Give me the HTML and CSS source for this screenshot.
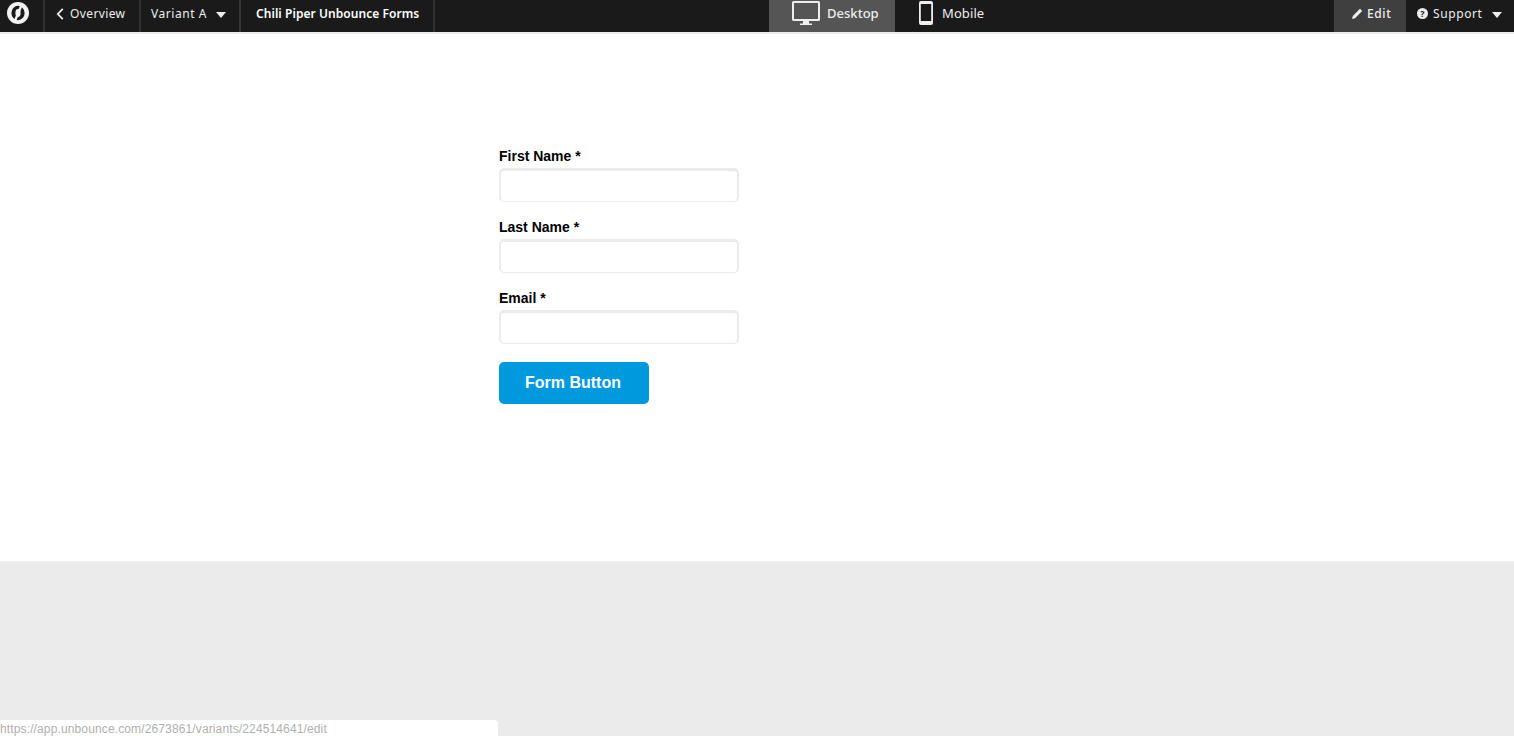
FILE: index.html
```html
<!DOCTYPE html>
<html lang="en">
<head>
<meta charset="utf-8">
<title>Chili Piper Unbounce Forms</title>
<link rel="stylesheet" href="styles.css">
</head>
<body>
<header class="topbar">
  <a class="logo-cell">
    <svg class="logo" viewBox="0 0 24 24" width="24" height="24"><circle cx="12" cy="12" r="11" fill="#f2f2f2"/><ellipse cx="12" cy="12" rx="6.600" ry="7.200" fill="#1a1a1a"/><ellipse cx="12" cy="12" rx="2.600" ry="4" fill="#f2f2f2"/><path d="M16 3 8.500 21" stroke="#f2f2f2" stroke-width="2.400" fill="none"/></svg>
  </a>
  <a class="cell cell-overview">
    <svg class="chev" viewBox="0 0 8 12" width="8" height="12"><path d="M6.800 .8 1.800 6l5 5.200" fill="none" stroke="#eee" stroke-width="1.800"/></svg>
    <span>Overview</span>
  </a>
  <a class="cell cell-variant"><span>Variant A</span><i class="caret"></i></a>
  <div class="cell cell-title">Chili Piper Unbounce Forms</div>
  <nav class="views">
    <a class="view view-desktop">
      <svg viewBox="0 0 30 26" width="30" height="26"><path fill-rule="evenodd" fill="#eee" d="M2.500 1h25A1.500 1.500 0 0 1 29 2.500v17a1.500 1.500 0 0 1-1.500 1.500h-25A1.500 1.500 0 0 1 1 19.500v-17A1.500 1.500 0 0 1 2.500 1zM3 3v16h24V3z"/><path fill="#eee" d="M12 21h6v2.500h3V25H9v-1.500h3z"/></svg>
      <span>Desktop</span>
    </a>
    <a class="view view-mobile">
      <svg viewBox="0 0 16 26" width="16" height="26"><path fill-rule="evenodd" fill="#eee" d="M3 1h10a2 2 0 0 1 2 2v20a2 2 0 0 1-2 2H3a2 2 0 0 1-2-2V3a2 2 0 0 1 2-2zM2.800 4v17h10.400V4z"/></svg>
      <span>Mobile</span>
    </a>
  </nav>
  <div class="actions">
    <a class="action-edit">
      <svg viewBox="0 0 12 12" width="12" height="12"><path fill="#eee" d="M9 .8 11.200 3 4 10.200 1 11l.8-3z"/></svg>
      <span>Edit</span>
    </a>
    <a class="action-support">
      <span class="help">?</span>
      <span>Support</span>
      <i class="caret caret-support"></i>
    </a>
  </div>
</header>
<main class="canvas">
  <form class="form">
    <label class="field"><span class="label">First Name *</span><span class="input"></span></label>
    <label class="field"><span class="label">Last Name *</span><span class="input"></span></label>
    <label class="field"><span class="label">Email *</span><span class="input"></span></label>
    <button class="submit" type="button">Form Button</button>
  </form>
</main>
<div class="backdrop"></div>
<div class="status">https://app.unbounce.com/2673861/variants/224514641/edit</div>
</body>
</html>
```

FILE: styles.css
```css
* { box-sizing: border-box; }
html, body { height: 100%; }
body {
  margin: 0;
  height: 736px;
  overflow: hidden;
  display: flex;
  flex-direction: column;
  background: #ebebeb;
  font-family: "Noto Sans", "Liberation Sans", sans-serif;
}
.topbar {
  display: flex;
  flex: none;
  height: 32px;
  background: #1a1a1a;
  color: #eeeeee;
  font-size: 12px;
  letter-spacing: 0.6px;
}
.logo-cell {
  width: 45px;
  flex: none;
  display: flex;
  align-items: center;
  padding-left: 6px;
  border-right: 2px solid #333;
}
.logo { display: block; margin-top: -6px; }
.cell {
  flex: none;
  display: flex;
  align-items: center;
  border-right: 2px solid #333;
  padding-bottom: 5px;
  white-space: nowrap;
}
.cell-overview { width: 96px; padding-left: 11px; gap: 6px; letter-spacing: 0.38px; }
.cell-variant { width: 100px; padding-left: 10px; gap: 9px; letter-spacing: 0.55px; }
.cell-title { width: 194px; padding-left: 15px; font-weight: 600; color: #fff; letter-spacing: 0.06px; }
.caret {
  display: block;
  width: 0;
  height: 0;
  border-left: 5px solid transparent;
  border-right: 5px solid transparent;
  border-top: 6px solid #eee;
  margin-top: 2px;
}
.views { display: flex; margin-left: 334px; }
.view {
  display: flex;
  align-items: center;
  height: 32px;
  padding-bottom: 6px;
  font-size: 13px;
}
.view svg { display: block; }
.view-desktop { width: 126px; background: #555; padding-left: 22px; gap: 6px; font-weight: 500; letter-spacing: 0.02px; }
.view-mobile { padding-left: 23px; gap: 8px; letter-spacing: 0.1px; }
.actions { display: flex; margin-left: auto; }
.action-edit {
  width: 72px;
  height: 32px;
  background: #3f3f3f;
  display: flex;
  align-items: center;
  gap: 4px;
  padding: 0 0 5px 17px;
  font-weight: 500;
}
.action-support {
  width: 108px;
  display: flex;
  align-items: center;
  gap: 5px;
  padding: 0 0 5px 11px;
}
.help {
  width: 11px;
  height: 11px;
  border-radius: 50%;
  background: #eee;
  color: #1a1a1a;
  font-size: 9px;
  line-height: 11px;
  letter-spacing: 0;
  font-weight: 700;
  text-align: center;
}
.caret-support { margin-left: 4px; }
.canvas {
  flex: none;
  height: 527px;
  margin-top: 2px;
  background: #fff;
  padding: 113px 0 0 499px;
}
.form { width: 240px; display: flex; flex-direction: column; }
.field { display: flex; flex-direction: column; margin-bottom: 16px; }
.label {
  font-family: "Liberation Sans", Arial, sans-serif;
  font-size: 14px;
  font-weight: 700;
  line-height: 19px;
  color: #000;
  margin-bottom: 2px;
}
.input {
  display: block;
  height: 34px;
  background: #fff;
  border: 1px solid #ebebeb;
  border-top-width: 3px;
  border-left-width: 2px;
  border-right-width: 2px;
  border-radius: 5px;
}
.submit {
  width: 150px;
  height: 42px;
  margin-top: 2px;
  padding: 0 2px 0 0;
  border: 0;
  border-radius: 5px;
  background: #0099dd;
  color: #fff;
  font-family: "Liberation Sans", Arial, sans-serif;
  font-size: 16px;
  font-weight: 700;
}
.backdrop { flex: 1; }
.status {
  position: absolute;
  left: 0;
  bottom: 0;
  width: 498px;
  height: 16px;
  background: #fff;
  border-top-right-radius: 4px;
  color: #b0b0b0;
  font-family: "Liberation Sans", Arial, sans-serif;
  font-size: 12px;
  line-height: 18px;
  letter-spacing: 0.13px;
  white-space: nowrap;
  overflow: hidden;
}
```
